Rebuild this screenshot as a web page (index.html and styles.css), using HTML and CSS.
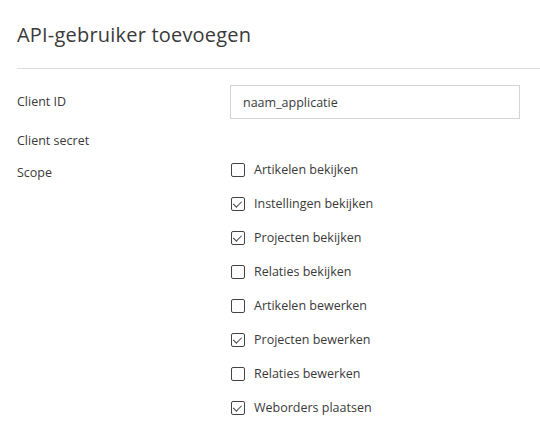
FILE: index.html
```html
<!DOCTYPE html>
<html lang="nl">
<head>
  <meta charset="UTF-8" />
  <meta name="viewport" content="width=device-width, initial-scale=1.0"/>
  <title>API-gebruiker toevoegen</title>
  <link rel="stylesheet" href="styles.css">
</head>
<body>
  <div class="header">
    <h1>API-gebruiker toevoegen</h1>
  </div>

  <form class="form">
    <div class="row">
      <label class="label label-input" for="clientId">Client ID</label>
      <input class="input" type="text" id="clientId" value="naam_applicatie" />
    </div>

    <div class="row row-secret">
      <span class="label">Client secret</span>
      <span></span>
    </div>

    <div class="row">
      <span class="label label-scope">Scope</span>
      <div class="checklist">
        <label class="check"><input type="checkbox" /><span class="box"></span>Artikelen bekijken</label>
        <label class="check"><input type="checkbox" checked /><span class="box"></span>Instellingen bekijken</label>
        <label class="check"><input type="checkbox" checked /><span class="box"></span>Projecten bekijken</label>
        <label class="check"><input type="checkbox" /><span class="box"></span>Relaties bekijken</label>
        <label class="check"><input type="checkbox" /><span class="box"></span>Artikelen bewerken</label>
        <label class="check"><input type="checkbox" checked /><span class="box"></span>Projecten bewerken</label>
        <label class="check"><input type="checkbox" /><span class="box"></span>Relaties bewerken</label>
        <label class="check"><input type="checkbox" checked /><span class="box"></span>Weborders plaatsen</label>
      </div>
    </div>
  </form>
</body>
</html>
```

FILE: styles.css
```css
:root {
  --text: #3a3a3a;
  --border: #d4d4d4;
  --line: #ddd;
}

body {
  margin: 0;
  background: #fff;
  color: var(--text);
  font-family: "Open Sans", "Noto Sans", Arial, sans-serif;
  font-size: 12.5px;
}

.header {
  margin-left: 17px;
  padding: 22px 0 20px;
  border-bottom: 1px solid var(--line);
}

h1 {
  margin: 0;
  font-size: 20px;
  font-weight: 400;
  line-height: 26px;
  letter-spacing: 0.2px;
}

.form {
  padding: 16px 0 0 17px;
}

.row {
  display: grid;
  grid-template-columns: 213px 290px;
}

.row-secret {
  margin: 12px 0 1px;
}

.label {
  line-height: 20px;
}

.label-input {
  line-height: 34px;
}

.label-scope {
  padding-top: 11px;
}

.input {
  height: 34px;
  box-sizing: border-box;
  border: 1px solid var(--border);
  padding: 0 12px;
  font: inherit;
  color: var(--text);
  outline: none;
}

.checklist {
  display: flex;
  flex-direction: column;
}

.check {
  display: flex;
  align-items: center;
  height: 34px;
  padding-left: 1px;
  cursor: pointer;
}

.check input {
  display: none;
}

.box {
  width: 14px;
  height: 14px;
  box-sizing: border-box;
  border: 1.5px solid #444;
  border-radius: 2px;
  margin-right: 9px;
  position: relative;
  top: 1px;
}

.check input:checked + .box::after {
  content: "";
  position: absolute;
  left: 3px;
  top: 0.5px;
  width: 3.5px;
  height: 7px;
  border: solid #444;
  border-width: 0 1.5px 1.5px 0;
  transform: rotate(45deg);
}
```
